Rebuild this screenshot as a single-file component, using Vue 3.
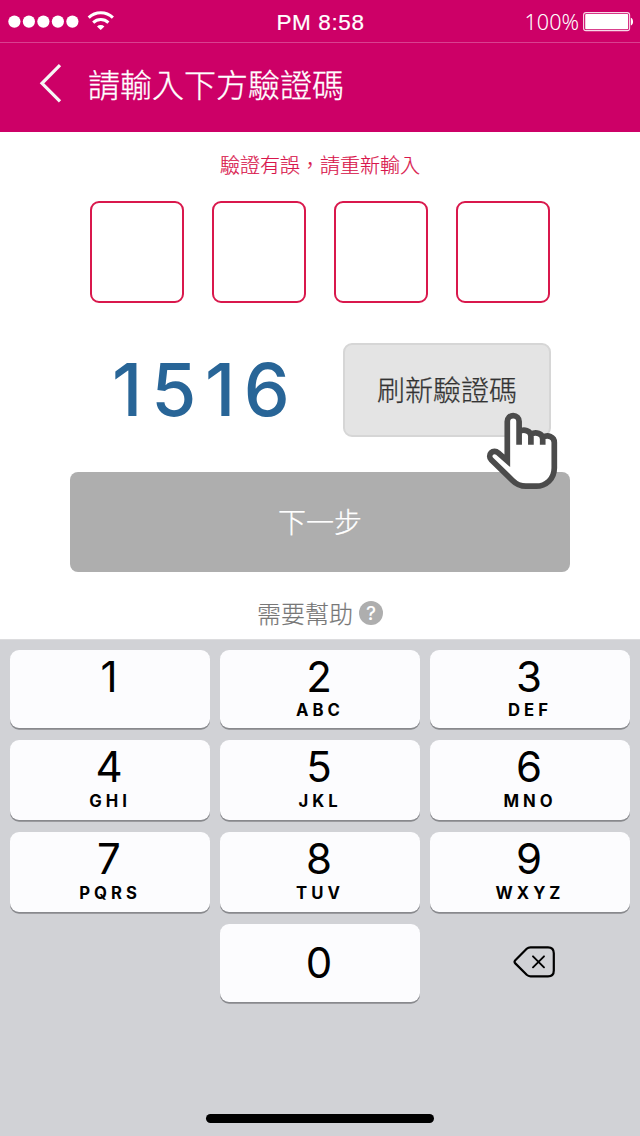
<script setup>
const code = ['1', '5', '1', '6']
const keys = [
  { n: '1', l: '' },
  { n: '2', l: 'ABC' },
  { n: '3', l: 'DEF' },
  { n: '4', l: 'GHI' },
  { n: '5', l: 'JKL' },
  { n: '6', l: 'MNO' },
  { n: '7', l: 'PQRS' },
  { n: '8', l: 'TUV' },
  { n: '9', l: 'WXYZ' },
]
</script>

<template>
  <div class="screen">
    <div class="status">
      <svg class="signal" width="116" height="24" viewBox="0 0 116 24">
        <g fill="#fff">
          <circle v-for="i in 5" :key="i" :cx="-0.1 + i * 14.5" cy="11.6" r="6.1" />
        </g>
        <g fill="none" stroke="#fff" stroke-width="3">
          <path d="M88.7 7.6a17.3 17.3 0 0 1 24.2 0" />
          <path d="M93.2 12.6a11 11 0 0 1 15.2 0" />
        </g>
        <path d="M97 16.5a5.4 5.4 0 0 1 7.4 0l-3.7 3.5z" fill="#fff" />
      </svg>
      <span class="time">PM 8:58</span>
      <div class="power">
        <span class="percent">100%</span>
        <svg width="51" height="20" viewBox="0 0 51 20">
          <rect x="0.6" y="0.6" width="46" height="18" rx="2.4" fill="none" stroke="#fff" stroke-width="1.1" opacity=".85" />
          <rect x="2.2" y="2" width="43" height="15.2" rx="1" fill="#fff" />
          <path d="M47.8 5.8c3 1 3 6.8 0 7.8z" fill="#fff" />
        </svg>
      </div>
    </div>

    <header class="bar">
      <svg class="back" width="24" height="40" viewBox="0 0 24 40">
        <path d="M21 2.2L3 20.3L21 38.4" fill="none" stroke="#f6f6f6" stroke-width="3.2" />
      </svg>
      <h1>請輸入下方驗證碼</h1>
    </header>

    <main class="content">
      <p class="error">驗證有誤，請重新輸入</p>
      <div class="boxes">
        <div v-for="i in 4" :key="i" class="box"></div>
      </div>
      <div class="verify">
        <div class="code">
          <span v-for="(d, i) in code" :key="i">{{ d }}</span>
        </div>
        <button class="refresh">刷新驗證碼</button>
        <svg class="hand" width="74" height="80" viewBox="485 411 74 80">
          <path
            d="M507.3 459.5V421.5a5.9 5.9 0 0 1 11.8 0V431.5C524 428.8 530.9 430.5 530.9 435.5V434.2C536 431.5 542.7 433.5 542.7 438.5V437.2C548 434.5 554.3 436.5 554.3 442.5V468C554.3 479 546 486.2 536 486.2H526C520 486.2 516.5 484.5 512.5 480.5L491.2 459.7A4.7 4.7 0 0 1 498 452.7Z"
            fill="#fff" />
          <path
            d="M507.3 459.5V421.5a5.9 5.9 0 0 1 11.8 0V444.8M519.1 431.5C524 428.8 530.9 430.5 530.9 436V444.8M530.9 434.2C536 431.5 542.7 433.5 542.7 439V444.8M542.7 437.2C548 434.5 554.3 436.5 554.3 442.5V468C554.3 479 546 486.2 536 486.2H526C520 486.2 516.5 484.5 512.5 480.5L491.2 459.7A4.7 4.7 0 0 1 498 452.7L507.3 460.8V455"
            fill="none" stroke="#4b4b4b" stroke-width="5.7" stroke-miterlimit="8" />
        </svg>
      </div>
      <button class="next">下一步</button>
      <div class="help">
        <span>需要幫助</span>
        <i class="mark">?</i>
      </div>
    </main>

    <section class="keyboard">
      <div class="pad">
        <div v-for="k in keys" :key="k.n" class="key">
          <span class="num">{{ k.n }}</span>
          <span class="letters">{{ k.l }}</span>
        </div>
        <div class="key zero"><span class="num">0</span></div>
        <div class="erase">
          <svg width="44" height="32" viewBox="0 0 44 32" fill="none" stroke="#000" stroke-linecap="round" stroke-linejoin="round">
            <path d="M17.5 1.3H35Q40.8 1.3 40.8 7.3V24.5Q40.8 30.3 35 30.3H17.5Q15.3 30.3 13.7 28.8L2.3 17.4Q0.8 15.8 2.3 14.2L13.7 2.8Q15.3 1.3 17.5 1.3Z" stroke-width="2.2" />
            <path d="M20 10.3L31 21.3M31 10.3L20 21.3" stroke-width="1.9" />
          </svg>
        </div>
      </div>
      <div class="home"></div>
    </section>
  </div>
</template>

<style>
body {
  margin: 0;
  background: #fff;
}
</style>

<style scoped>
.screen {
  width: 640px;
  height: 1136px;
  display: flex;
  flex-direction: column;
  overflow: hidden;
  background: #fff;
  font-family: "Noto Sans CJK TC", sans-serif;
}
.status {
  box-sizing: border-box;
  height: 43px;
  flex: none;
  display: grid;
  grid-template-columns: 1fr auto 1fr;
  align-items: start;
  background: #cd0067;
  border-bottom: 1px solid #d94090;
  color: #fff;
}
.signal {
  margin-top: 10px;
}
.time {
  margin: 9px 0 0 1px;
  font: 400 22.5px/28px "Liberation Sans", sans-serif;
  letter-spacing: 0.6px;
  -webkit-text-stroke: 0.2px #fff;
}
.power {
  display: flex;
  justify-content: flex-end;
  gap: 4px;
  margin: 7px 6px 0 0;
}
.power svg {
  margin-top: 5px;
}
.percent {
  font: 300 21.6px/29px "Noto Sans", sans-serif;
}
.bar {
  height: 89px;
  flex: none;
  display: flex;
  align-items: center;
  background: #cd0067;
}
.back {
  margin: 0 25px 9px 39px;
}
h1 {
  margin: 0 0 9px;
  color: #fff;
  font-size: 32px;
  font-weight: 300;
  line-height: 48px;
  -webkit-text-stroke: 0.3px;
}
.content {
  height: 507px;
  flex: none;
  display: flex;
  flex-direction: column;
  align-items: center;
}
.error {
  margin: 18px 0 0;
  color: #d9164c;
  font-size: 20px;
  font-weight: 300;
  line-height: 30px;
  -webkit-text-stroke: 0.2px;
}
.boxes {
  display: flex;
  gap: 28px;
  margin-top: 21px;
}
.box {
  box-sizing: border-box;
  width: 94px;
  height: 102px;
  border: 2px solid #d9184c;
  border-radius: 9px;
}
.verify {
  position: relative;
  display: flex;
  width: 460px;
  height: 94px;
  margin-top: 40px;
}
.code {
  display: flex;
  width: 253px;
  flex: none;
  padding-left: 14px;
  box-sizing: border-box;
  color: #286597;
  font: 550 73px/94px Inter, sans-serif;
}
.code span {
  width: 46.5px;
  display: flex;
  justify-content: center;
}
button {
  padding: 0;
  font-family: inherit;
}
.refresh {
  box-sizing: border-box;
  width: 208px;
  height: 94px;
  border: 2px solid #d6d6d6;
  border-radius: 9px;
  background: #e4e4e4;
  color: #333;
  font-size: 28px;
  font-weight: 300;
  padding-bottom: 2px;
  flex: none;
  -webkit-text-stroke: 0.25px;
}
.hand {
  position: absolute;
  left: 395px;
  top: 68px;
  z-index: 2;
}
.next {
  width: 500px;
  height: 100px;
  flex: none;
  margin-top: 35px;
  padding-bottom: 2px;
  border: 0;
  border-radius: 8px;
  background: #aeaeae;
  color: #fff;
  font-size: 28px;
  font-weight: 300;
  -webkit-text-stroke: 0.25px;
}
.help {
  display: flex;
  align-items: center;
  gap: 6px;
  margin-top: 23px;
  color: #777;
  font-size: 24px;
  font-weight: 300;
  line-height: 36px;
  -webkit-text-stroke: 0.2px;
}
.mark {
  width: 24px;
  height: 24px;
  border-radius: 50%;
  background: #aeaeae;
  color: #fff;
  font: 500 19px/25px Inter, sans-serif;
  text-align: center;
  -webkit-text-stroke: 0;
}
.keyboard {
  height: 497px;
  flex: none;
  box-sizing: border-box;
  padding: 10px 10px 0;
  border-top: 1px solid #dcdcde;
  background: #d1d2d6;
  font-family: Inter, sans-serif;
}
.pad {
  display: grid;
  grid-template-columns: repeat(3, 200px);
  grid-template-rows: 78px 80px 80px 78px;
  gap: 12px 10px;
}
.key {
  display: flex;
  flex-direction: column;
  align-items: center;
  border-radius: 9px;
  background: #fcfcfe;
  box-shadow: 0 1.7px 0 #88898d;
}
.num {
  margin-top: 6px;
  padding-right: 2px;
  font-size: 42px;
  line-height: 42px;
}
.letters {
  margin-top: 3px;
  font-size: 16.7px;
  font-weight: 650;
  line-height: 20px;
  letter-spacing: 4px;
}
.key:nth-child(-n + 3) .letters {
  margin-top: 2px;
}
.zero {
  grid-column: 2;
}
.zero .num {
  margin-top: 18px;
}
.erase {
  padding: 22px 0 0 83px;
}
.home {
  width: 228px;
  height: 9px;
  margin: 111.5px auto 0;
  border-radius: 5px;
  background: #000;
}
</style>
